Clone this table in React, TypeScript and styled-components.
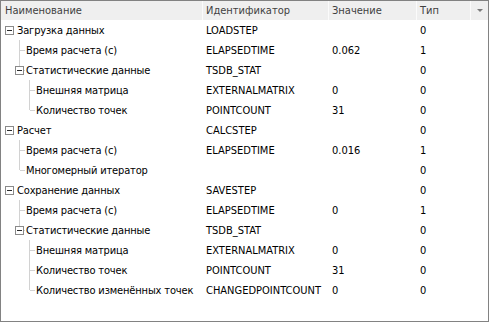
import React from "react";
import styled, { createGlobalStyle } from "styled-components";

const Global = createGlobalStyle`
  html, body { margin: 0; padding: 0; background: #ffffff; }
  body {
    font-family: Tahoma, "DejaVu Sans Condensed", "DejaVu Sans", sans-serif;
    font-stretch: condensed;
    font-size: 11px;
  }
`;

type Node = {
  name: string;
  id: string;
  value: string;
  type: string;
  level: number;
  group?: boolean;
  last?: boolean;
  // per ancestor level (1..level-1): whether that branch line keeps going down
  rails?: boolean[];
};

const rows: Node[] = [
  { name: "Загрузка данных", id: "LOADSTEP", value: "", type: "0", level: 0, group: true },
  { name: "Время расчета (с)", id: "ELAPSEDTIME", value: "0.062", type: "1", level: 1 },
  { name: "Статистические данные", id: "TSDB_STAT", value: "", type: "0", level: 1, group: true, last: true },
  { name: "Внешняя матрица", id: "EXTERNALMATRIX", value: "0", type: "0", level: 2, rails: [false] },
  { name: "Количество точек", id: "POINTCOUNT", value: "31", type: "0", level: 2, last: true, rails: [false] },
  { name: "Расчет", id: "CALCSTEP", value: "", type: "0", level: 0, group: true },
  { name: "Время расчета (с)", id: "ELAPSEDTIME", value: "0.016", type: "1", level: 1 },
  { name: "Многомерный итератор", id: "", value: "", type: "0", level: 1, last: true },
  { name: "Сохранение данных", id: "SAVESTEP", value: "", type: "0", level: 0, group: true },
  { name: "Время расчета (с)", id: "ELAPSEDTIME", value: "0", type: "1", level: 1 },
  { name: "Статистические данные", id: "TSDB_STAT", value: "", type: "0", level: 1, group: true, last: true },
  { name: "Внешняя матрица", id: "EXTERNALMATRIX", value: "0", type: "0", level: 2, rails: [false] },
  { name: "Количество точек", id: "POINTCOUNT", value: "31", type: "0", level: 2, rails: [false] },
  { name: "Количество изменённых точек", id: "CHANGEDPOINTCOUNT", value: "0", type: "0", level: 2, last: true, rails: [false] },
];

const COLS = "201px 126px 88px 54px 1fr";
const LINE = "#d2d2d2";

const Frame = styled.div`
  box-sizing: border-box;
  width: 489px;
  height: 322px;
  border: 1px solid #828282;
  background: #ffffff;
  overflow: hidden;
`;

const Header = styled.div`
  display: grid;
  grid-template-columns: ${COLS};
  height: 19px;
  background: #efefef;
  color: #3f3f3f;
`;

const HeadCell = styled.div<{ $first?: boolean }>`
  display: flex;
  align-items: center;
  padding-left: ${(p) => (p.$first ? "4px" : "3px")};
  border-left: ${(p) => (p.$first ? "none" : "1px solid #fbfbfb")};
  white-space: nowrap;
  overflow: hidden;
`;

const MenuCell = styled.div`
  display: flex;
  align-items: center;
  justify-content: center;
  border-left: 1px solid #fbfbfb;
`;

const Arrow = styled.span`
  width: 0;
  height: 0;
  border-left: 3px solid transparent;
  border-right: 3px solid transparent;
  border-top: 3px solid #7a7a7a;
  margin-left: 1px;
`;

const Row = styled.div`
  display: grid;
  grid-template-columns: ${COLS};
  height: 20px;
  color: #000000;
`;

const NameCell = styled.div`
  display: flex;
  align-items: stretch;
  padding-left: 4px;
  white-space: nowrap;
`;

const Slot = styled.div`
  position: relative;
  flex: 0 0 10px;
  width: 10px;
`;

const Rail = styled.span<{ $full: boolean }>`
  position: absolute;
  left: 4px;
  top: 0;
  width: 1px;
  height: ${(p) => (p.$full ? "20px" : "10px")};
  background: ${LINE};
`;

const Stub = styled.span`
  position: absolute;
  left: 5px;
  top: 10px;
  width: 5px;
  height: 1px;
  background: ${LINE};
`;

const Toggle = styled.span`
  position: absolute;
  left: 0;
  top: 6px;
  box-sizing: border-box;
  width: 9px;
  height: 9px;
  border: 1px solid #8a8a8a;
  background: #ffffff;
  &::after {
    content: "";
    position: absolute;
    left: 1px;
    top: 3px;
    width: 5px;
    height: 1px;
    background: #2b2b2b;
  }
`;

const Label = styled.span<{ $root: boolean }>`
  display: flex;
  align-items: center;
  padding-left: ${(p) => (p.$root ? "2px" : "1px")};
  letter-spacing: -0.15px;
`;

const Cell = styled.div`
  display: flex;
  align-items: center;
  padding-left: 4px;
  white-space: nowrap;
`;

function TreeSlots({ node }: { node: Node }) {
  const slots: React.ReactNode[] = [];
  if (node.level === 0) {
    slots.push(<Slot key="own">{node.group && <Toggle />}</Slot>);
    return <>{slots}</>;
  }
  // root level draws no connecting lines
  slots.push(<Slot key="root" />);
  for (let l = 1; l < node.level; l++) {
    const keep = node.rails?.[l - 1];
    slots.push(<Slot key={"a" + l}>{keep && <Rail $full />}</Slot>);
  }
  slots.push(
    <Slot key="own">
      <Rail $full={!node.last} />
      <Stub />
      {node.group && <Toggle />}
    </Slot>
  );
  return <>{slots}</>;
}

export default function App() {
  return (
    <>
      <Global />
      <Frame>
        <Header>
          <HeadCell $first>Наименование</HeadCell>
          <HeadCell>Идентификатор</HeadCell>
          <HeadCell>Значение</HeadCell>
          <HeadCell>Тип</HeadCell>
          <MenuCell>
            <Arrow />
          </MenuCell>
        </Header>
        {rows.map((r, i) => (
          <Row key={i}>
            <NameCell>
              <TreeSlots node={r} />
              <Label $root={r.level === 0}>{r.name}</Label>
            </NameCell>
            <Cell>{r.id}</Cell>
            <Cell>{r.value}</Cell>
            <Cell>{r.type}</Cell>
            <Cell />
          </Row>
        ))}
      </Frame>
    </>
  );
}
